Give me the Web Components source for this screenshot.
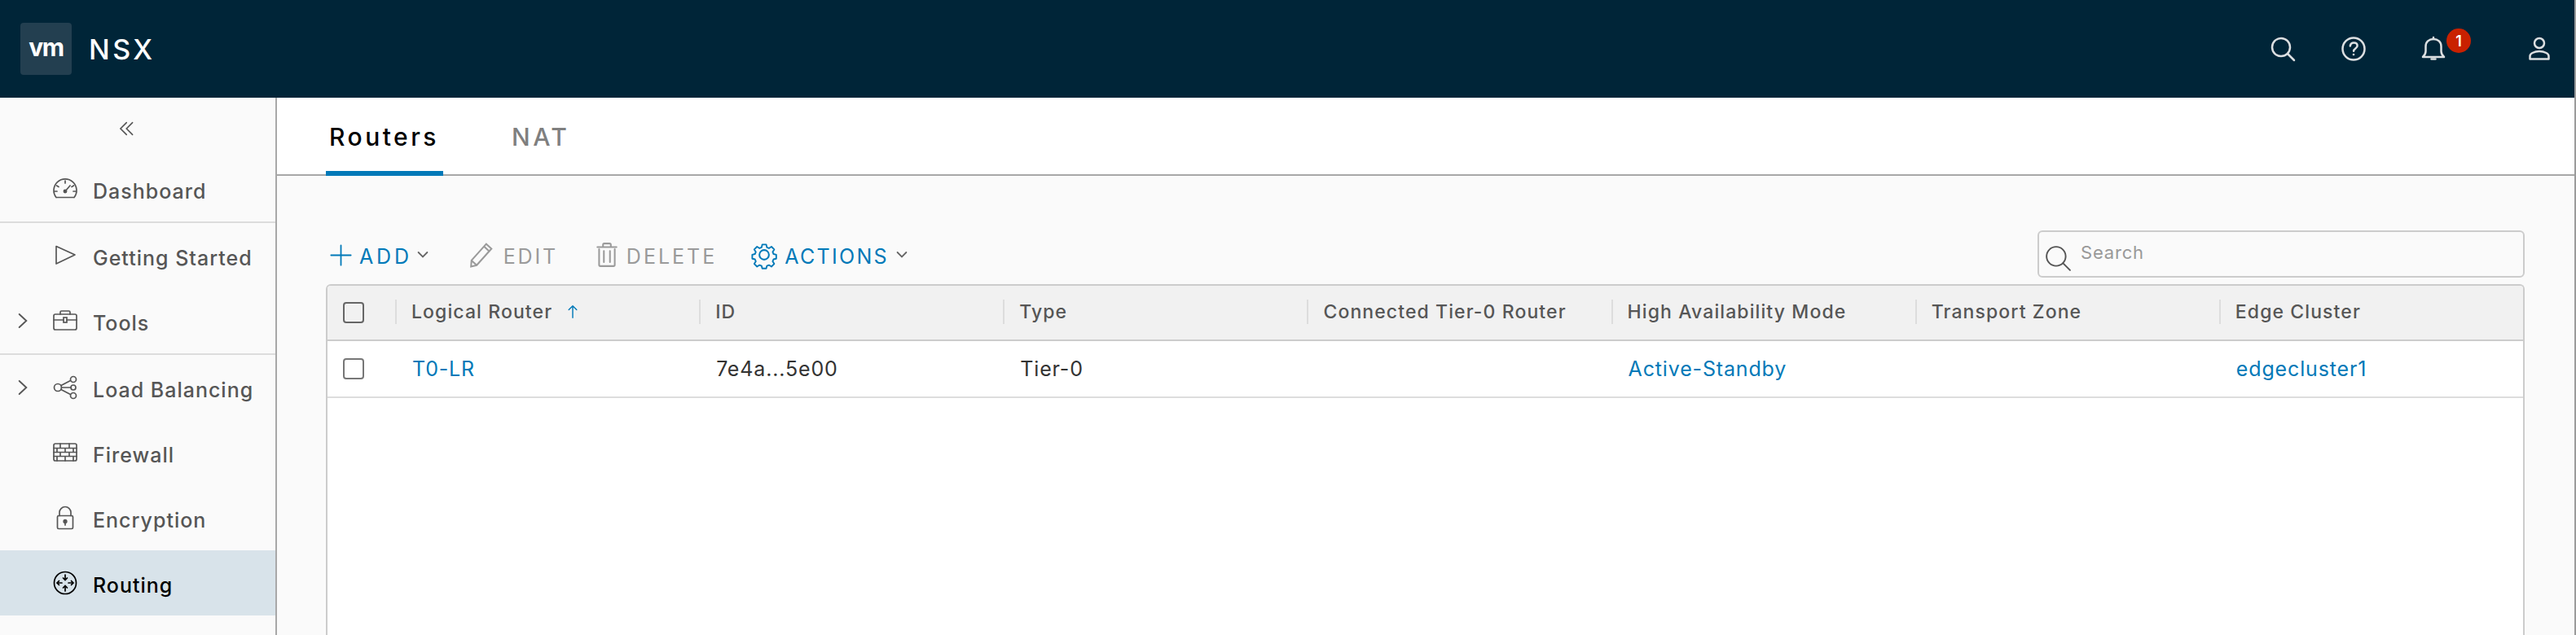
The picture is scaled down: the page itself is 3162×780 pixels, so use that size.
<!DOCTYPE html>
<html>
<head>
<meta charset="utf-8">
<title>NSX</title>
<style>
  html, body { margin: 0; height: 100%; overflow: hidden; background: #fafafa; }
  body { font-family: 'Inter', 'Liberation Sans', sans-serif; }
</style>
</head>
<body>
<nsx-app>
  <nsx-header slot="header"></nsx-header>
  <nsx-sidebar slot="sidebar">
    <nsx-nav-item icon="dashboard" divider>Dashboard</nsx-nav-item>
    <nsx-nav-item icon="play">Getting Started</nsx-nav-item>
    <nsx-nav-item icon="tools" expandable divider>Tools</nsx-nav-item>
    <nsx-nav-item icon="balance" expandable>Load Balancing</nsx-nav-item>
    <nsx-nav-item icon="firewall">Firewall</nsx-nav-item>
    <nsx-nav-item icon="lock">Encryption</nsx-nav-item>
    <nsx-nav-item icon="routing" selected>Routing</nsx-nav-item>
  </nsx-sidebar>
  <nsx-tabs></nsx-tabs>
  <nsx-toolbar></nsx-toolbar>
  <nsx-grid></nsx-grid>
</nsx-app>

<script>
const ICONS = {
  dashboard: `<path d="M4 25.5A14 14 0 1 1 26 25.500M4 25.500h22"/><path d="M15 5v3M4.500 11l2.500 1.500M25.500 11L23 12.500M2 18h3M25 18h3M15 18l6-7"/><circle cx="15" cy="18" r="1.600" fill="currentColor"/>`,
  play: `<path d="M4 3.500L27 14 4 25z" stroke-linejoin="round"/>`,
  tools: `<rect x="1" y="7" width="28" height="19" rx="2"/><path d="M9 7V4.500C9 3.500 9.500 3 10.500 3h9c1 0 1.500.5 1.500 1.500V7M1 14h12M17 14h12"/><rect x="13" y="11" width="4" height="6"/>`,
  balance: `<circle cx="6" cy="15" r="4.500"/><circle cx="25" cy="5" r="3.500"/><circle cx="25" cy="15" r="3"/><circle cx="25" cy="25" r="3.500"/><path d="M10 12.500L21.500 6.500M10.500 15H22M10 17.500L21.500 23.500"/>`,
  firewall: `<rect x="1" y="4" width="28" height="21" rx="2"/><path d="M1 9.500h28M1 14.500h28M1 19.500h28M9 4v5.500M20 4v5.500M5 9.500v5M15 9.500v5M25 9.500v5M9 14.500v5M20 14.500v5M5 19.500v5.500M15 19.500v5.500M25 19.500v5.500"/>`,
  lock: `<rect x="5.500" y="12.500" width="19" height="16" rx="1.500"/><path d="M8 12.500V8.500a7 7 0 0 1 14 0v4"/><circle cx="15" cy="19.500" r="1.800" fill="currentColor"/><path d="M15 20v4"/>`,
  routing: `<circle cx="15" cy="15" r="13.500"/><path d="M15 5v6.500M12.500 9l2.500 2.500L17.500 9M15 25v-6.500M12.500 21l2.500-2.500 2.500 2.500M11 15H5M7.500 12.500L5 15l2.500 2.500M19 15h6M22.500 12.500L25 15l-2.500 2.500"/>`,
  chevron: `<path d="M7 3l13 12L7 27"/>`,
  collapse: `<path d="M14 5L4 15l10 10M24 5L14 15l10 10"/>`,
  search: `<circle cx="13" cy="13" r="11"/><path d="M21 21l8 8"/>`,
  help: `<circle cx="15" cy="15" r="13.500"/><path d="M10.800 11.500c.4-2.600 2.300-4 4.500-4 2.500 0 4.300 1.500 4.300 3.700 0 3.300-4.500 3.200-4.500 6.600"/><circle cx="15" cy="22" r="1.300" fill="currentColor" stroke="none"/>`,
  bell: `<path d="M2 25c1.500-1.500 3.500-3.500 3.500-7v-6c0-5.500 4-9 9.500-9s9.500 3.500 9.500 9v6c0 3.500 2 5.500 3.500 7z" stroke-linejoin="round"/><path d="M15 1v2M12.500 27.500h5"/>`,
  user: `<circle cx="15" cy="8" r="6"/><path d="M3.500 27.500v-3.500c0-2 1-3 3-4 2.500-1.300 5.500-2 8.500-2s6 .7 8.500 2c2 1 3 2 3 4v3.500z" stroke-linejoin="round"/>`,
  plus: `<path d="M15 1.500v27M1.500 15h27"/>`,
  pencil: `<path d="M3.500 21.500L20.500 2.500l6 5.500-17 19-6.500 1.500zM18 5.500l6 5.500M3.500 21.500l5.500 5"/>`,
  trash: `<path d="M4 6h22M10.500 6V3.500c0-1 .5-1.500 1.500-1.500h6c1 0 1.500.5 1.500 1.500V6M6 8.500v18c0 1 .5 1.500 1.500 1.500h15c1 0 1.500-.5 1.500-1.500v-18M11.500 10.500v13M18.500 10.500v13"/>`,
  gear: `<path d="M12.500 2h5l.8 3.600 2.600 1.100 3.100-2 3.500 3.500-2 3.100 1.100 2.600 3.400.8v5l-3.400.8-1.100 2.600 2 3.100-3.500 3.500-3.100-2-2.600 1.100-.8 3.200h-5l-.8-3.200-2.600-1.100-3.100 2-3.500-3.500 2-3.100-1.100-2.600-3.400-.8v-5l3.400-.8 1.100-2.600-2-3.100 3.500-3.500 3.100 2 2.600-1.100z" transform="translate(1.300 1.300) scale(.92)" stroke-linejoin="round"/><circle cx="15" cy="15" r="5.500"/>`,
  caret: `<path d="M6 10l9 9 9-9"/>`,
  arrow: `<path d="M15 27V3M7 11l8-8 8 8"/>`
};

class NsxIcon extends HTMLElement {
  connectedCallback() {
    const size = this.getAttribute('size') || 30;
    const stroke = this.getAttribute('stroke') || 1.7;
    const shadow = this.attachShadow({ mode: 'open' });
    shadow.innerHTML = `
      <style>
        :host { display: inline-flex; flex: none; width: ${size}px; height: ${size}px; }
        svg { width: 100%; height: 100%; display: block; overflow: visible; }
      </style>
      <svg viewBox="0 0 30 30" fill="none" stroke="currentColor" stroke-width="${stroke}" stroke-linecap="round">${ICONS[this.getAttribute('name')]}</svg>`;
  }
}
customElements.define('nsx-icon', NsxIcon);

class NsxApp extends HTMLElement {
  constructor() {
    super();
    this.attachShadow({ mode: 'open' }).innerHTML = `
      <style>
        :host { display: flex; width: 3162px; height: 780px; overflow: hidden; }
        .page { width: 3160px; display: flex; flex-direction: column; }
        .strip { width: 2px; background: #9b9b9b; }
        .body { flex: 1; display: flex; min-height: 0; }
        .main { flex: 1; display: flex; flex-direction: column; min-width: 0; background: #fafafa; }
      </style>
      <div class="page">
        <slot name="header"></slot>
        <div class="body">
          <slot name="sidebar"></slot>
          <div class="main"><slot></slot></div>
        </div>
      </div>
      <div class="strip"></div>`;
  }
}
customElements.define('nsx-app', NsxApp);

class NsxHeader extends HTMLElement {
  constructor() {
    super();
    this.attachShadow({ mode: 'open' }).innerHTML = `
      <style>
        :host { display: flex; align-items: center; height: 120px; flex: none; background: #002538; color: #fff; padding-left: 25px; box-sizing: border-box; }
        .logo { width: 63px; height: 64px; background: #233f50; border-radius: 4px; display: flex; align-items: center; justify-content: center; font-size: 30px; font-weight: 700; letter-spacing: -1.5px; padding-bottom: 4px; box-sizing: border-box; }
        .name { margin-left: 21px; font-size: 34px; font-weight: 500; letter-spacing: 3.5px; }
        .icons { margin-left: auto; display: flex; align-items: center; color: #dcdfe1; height: 100%; }
        .bell { position: relative; display: flex; margin-left: 68px; }
        .badge { position: absolute; left: 31px; top: -10px; width: 30px; height: 30px; border-radius: 50%; background: #c92100; color: #fff; font-size: 18px; font-weight: 600; display: flex; align-items: center; justify-content: center; }
        .help { margin-left: 57px; }
        .user { margin-left: 100px; margin-right: 28px; }
      </style>
      <div class="logo">vm</div>
      <div class="name">NSX</div>
      <div class="icons">
        <nsx-icon name="search" stroke="2.500"></nsx-icon>
        <nsx-icon class="help" name="help" stroke="2.500"></nsx-icon>
        <div class="bell"><nsx-icon name="bell" stroke="2.500"></nsx-icon><span class="badge">1</span></div>
        <nsx-icon class="user" name="user" stroke="2.500"></nsx-icon>
      </div>`;
  }
}
customElements.define('nsx-header', NsxHeader);

class NsxSidebar extends HTMLElement {
  constructor() {
    super();
    this.attachShadow({ mode: 'open' }).innerHTML = `
      <style>
        :host { display: block; width: 340px; flex: none; box-sizing: border-box; border-right: 2px solid #a8a8a8; background: #fafafa; }
        .collapse { height: 72px; display: flex; align-items: center; justify-content: center; color: #565656; padding-top: 4px; padding-right: 26px; box-sizing: border-box; }
      </style>
      <div class="collapse"><nsx-icon name="collapse" size="22" stroke="2.200"></nsx-icon></div>
      <slot></slot>`;
  }
}
customElements.define('nsx-sidebar', NsxSidebar);

class NsxNavItem extends HTMLElement {
  constructor() {
    super();
    const root = this.attachShadow({ mode: 'open' });
    const chevron = this.hasAttribute('expandable')
      ? `<nsx-icon name="chevron" size="20" stroke="2.800"></nsx-icon>` : '';
    root.innerHTML = `
      <style>
        :host { display: flex; align-items: center; height: 80px; box-sizing: content-box; color: #565656; font-size: 25px; font-weight: 500; letter-spacing: 1px; }
        :host([divider]) { border-bottom: 2px solid #dcdcdc; }
        :host([selected]) { background: #d8e3ea; color: #000; }
        .chev { width: 65px; flex: none; padding-left: 19px; box-sizing: border-box; display: flex; }
        .text { margin-left: 19px; padding-top: 5px; white-space: nowrap; }
      </style>
      <div class="chev">${chevron}</div>
      <nsx-icon name="${this.getAttribute('icon')}"></nsx-icon>
      <div class="text"><slot></slot></div>`;
  }
}
customElements.define('nsx-nav-item', NsxNavItem);

class NsxTabs extends HTMLElement {
  constructor() {
    super();
    this.attachShadow({ mode: 'open' }).innerHTML = `
      <style>
        :host { display: flex; height: 96px; flex: none; box-sizing: border-box; padding-left: 60px; background: #fff; border-bottom: 2px solid #a8a8a8; font-size: 30px; font-weight: 500; letter-spacing: 3.500px; }
        .tab { height: 96px; box-sizing: border-box; padding: 30px 4px 0; white-space: nowrap; color: #7f7f7f; }
        .on { color: #000; width: 144px; border-bottom: 6px solid #0079b8; }
        .nat { margin-left: 80px; }
      </style>
      <div class="tab on">Routers</div>
      <div class="tab nat">NAT</div>`;
  }
}
customElements.define('nsx-tabs', NsxTabs);

class NsxToolbar extends HTMLElement {
  constructor() {
    super();
    this.attachShadow({ mode: 'open' }).innerHTML = `
      <style>
        :host { display: flex; align-items: flex-start; height: 133px; flex: none; box-sizing: border-box; padding: 67px 61px 0 60px; font-size: 25px; letter-spacing: 2.500px; }
        .btn { display: flex; align-items: center; height: 58px; color: #0079b8; white-space: nowrap; margin-top: 1px; }
        .off { color: #9a9a9a; }
        .add { margin-left: 5px; letter-spacing: 3.800px; }
        .edit { margin-left: 47px; letter-spacing: 2.800px; }
        .del { margin-left: 44px; letter-spacing: 3px; }
        .act { margin-left: 42px; letter-spacing: 2.300px; }
        .label { margin-left: 9px; padding-top: 3px; }
        .edit .label { margin-left: 11px; }
        .del .label { margin-left: 8px; }
        .caret { color: #666; margin-left: 4px; }
        .act .caret { margin-left: 7px; }
        .search { margin-left: auto; width: 598px; height: 58px; box-sizing: border-box; border: 2px solid #ccc; border-radius: 6px; display: flex; align-items: center; padding-left: 7px; color: #555; }
        .ph { margin-left: 12px; font-size: 22px; letter-spacing: .8px; color: #999; position: relative; top: -2px; }
        .search nsx-icon { position: relative; top: 5px; }
      </style>
      <div class="btn add"><nsx-icon name="plus" size="27" stroke="2"></nsx-icon><span class="label">ADD</span><nsx-icon class="caret" name="caret" size="18" stroke="3"></nsx-icon></div>
      <div class="btn off edit"><nsx-icon name="pencil" size="32" stroke="1.900"></nsx-icon><span class="label">EDIT</span></div>
      <div class="btn off del"><nsx-icon name="trash" size="32" stroke="1.900"></nsx-icon><span class="label">DELETE</span></div>
      <div class="btn act"><nsx-icon name="gear" size="32" stroke="1.900"></nsx-icon><span class="label">ACTIONS</span><nsx-icon class="caret" name="caret" size="18" stroke="3"></nsx-icon></div>
      <div class="search"><nsx-icon name="search" size="32" stroke="1.800"></nsx-icon><span class="ph">Search</span></div>`;
  }
}
customElements.define('nsx-toolbar', NsxToolbar);

class NsxGrid extends HTMLElement {
  constructor() {
    super();
    const cols = ['Logical Router', 'ID', 'Type', 'Connected Tier-0 Router', 'High Availability Mode', 'Transport Zone', 'Edge Cluster'];
    const head = cols.map((c, i) => `<div class="hc"><span>${c}</span>${i === 0 ? '<nsx-icon class="sort" name="arrow" size="18" stroke="2.400"></nsx-icon>' : ''}</div>`).join('');
    const cells = [['T0-LR', 1], ['7e4a...5e00', 0], ['Tier-0', 0], ['', 0], ['Active-Standby', 1], ['', 0], ['edgecluster1', 1]];
    const row = cells.map(([t, link]) => `<div class="c${link ? ' link' : ''}">${t}</div>`).join('');
    this.attachShadow({ mode: 'open' }).innerHTML = `
      <style>
        :host { display: block; flex: 1; box-sizing: border-box; margin: 0 61px 0 60px; border: 2px solid #ccc; border-bottom: 0; border-radius: 6px 6px 0 0; background: #fff; }
        .row { display: grid; grid-template-columns: 83px repeat(7, 1fr); align-items: center; box-sizing: border-box; }
        .hd { height: 68px; background: #f1f1f1; border-bottom: 2px solid #ccc; border-radius: 4px 4px 0 0; font-size: 23px; font-weight: 500; letter-spacing: 1.100px; color: #565656; }
        .bd { height: 70px; border-bottom: 2px solid #ddd; font-size: 25px; letter-spacing: .85px; color: #333; }
        .hc { height: 30px; border-left: 2px solid #ddd; padding-left: 18px; display: flex; align-items: center; white-space: nowrap; position: relative; top: -1px; }
        .c { padding-left: 21px; white-space: nowrap; }
        .link { color: #0079b8; }
        .sort { color: #0079b8; margin-left: 16px; }
        .cbx { width: 26px; height: 26px; box-sizing: border-box; border: 2px solid #666; border-radius: 4px; margin-left: 19px; }
        .bd .cbx { border-color: #777; }
      </style>
      <div class="row hd"><div class="cbx"></div>${head}</div>
      <div class="row bd"><div class="cbx"></div>${row}</div>`;
  }
}
customElements.define('nsx-grid', NsxGrid);
</script>
</body>
</html>
